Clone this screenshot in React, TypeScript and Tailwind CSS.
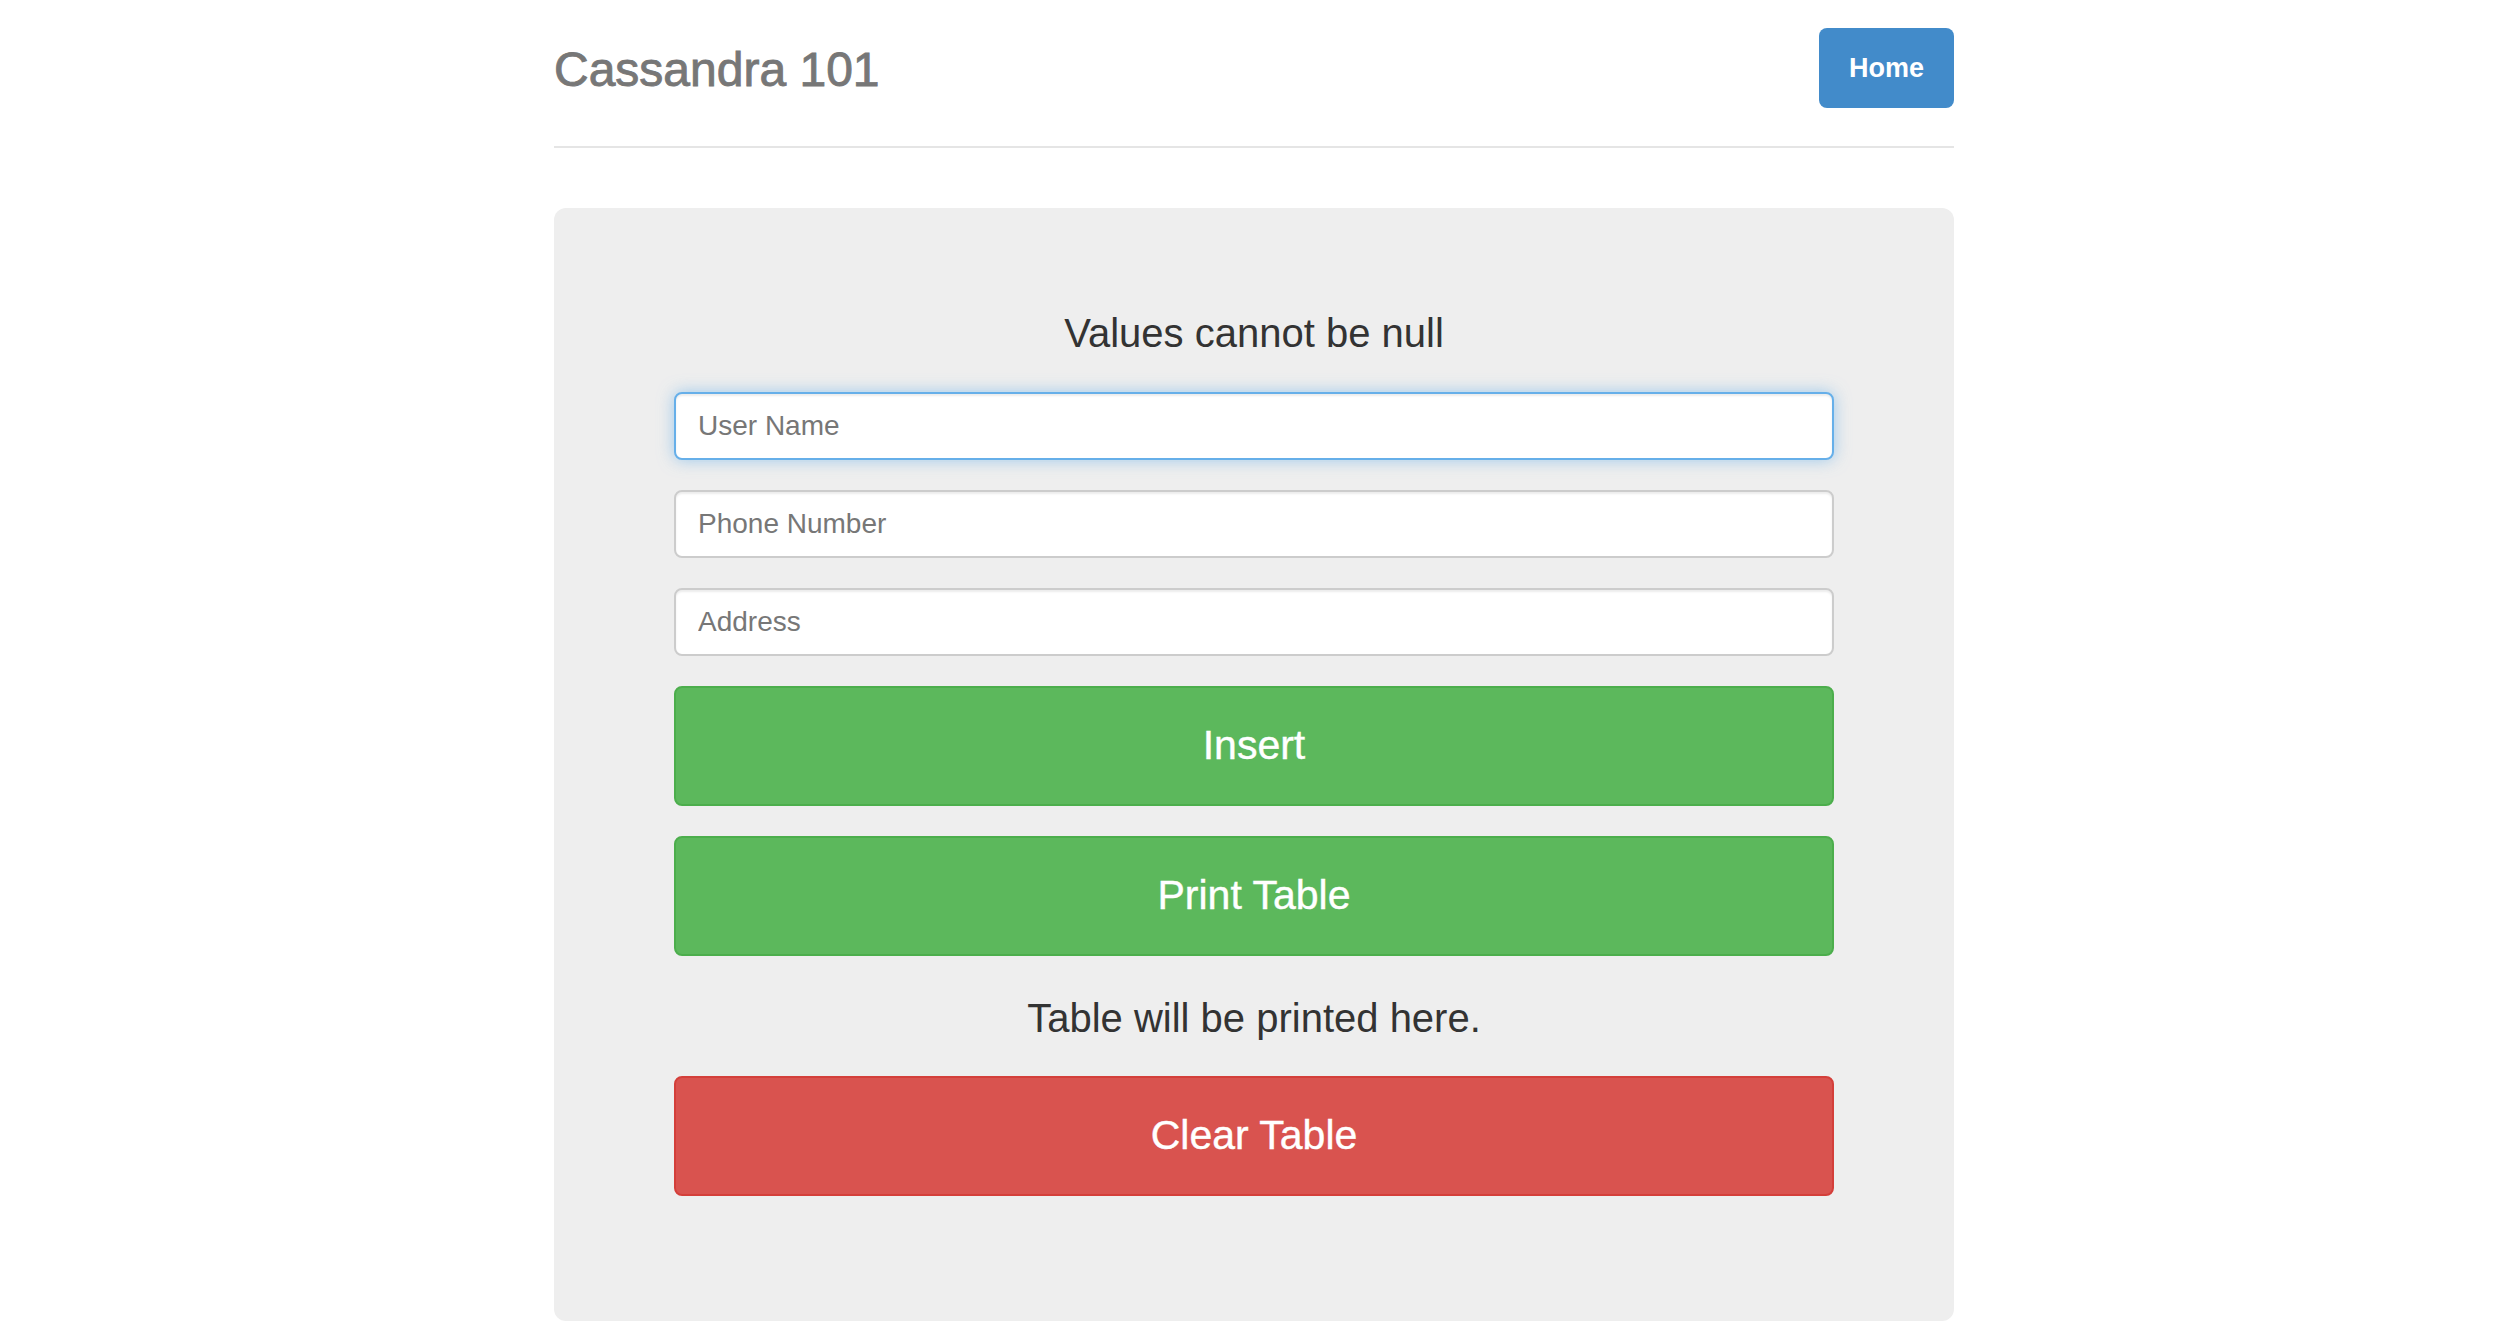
import React from "react";

const inputBase =
  "w-full h-[68px] rounded-[8px] border-2 bg-white pl-[22px] pr-[22px] text-[28px] text-[#555] placeholder:text-[#777] outline-none";

const btn =
  "h-[120px] w-full rounded-[8px] border-2 text-[41px] text-white [-webkit-text-stroke:0.4px_#fff]";

export default function App() {
  return (
    <div className="min-h-screen bg-white font-['Liberation_Sans',Arial,sans-serif] text-[#333]">
      <div className="w-[1400px] mx-auto">
        <header className="flex items-center justify-between pt-[28px] pb-[38px] border-b-2 border-[#e5e5e5]">
          <h3 className="pt-[4px] text-[48px] leading-[76px] text-[#777] [-webkit-text-stroke:0.9px_#777]">Cassandra 101</h3>
          <a href="#" className="flex h-[80px] items-center rounded-[8px] bg-[#428bca] px-[30px] text-[27px] font-bold text-white">
            Home
          </a>
        </header>

        <div className="mt-[60px] rounded-[12px] bg-[#eee] px-[120px] pt-[97px] pb-[125px] text-center">
          <p className="text-[40px] leading-[56px]">Values cannot be null</p>

          <div className="mt-[31px] flex flex-col gap-[30px]">
            <input
              type="text"
              placeholder="User Name"
              className={inputBase + " border-[#66afe9] shadow-[inset_0_2px_2px_rgba(0,0,0,0.075),0_0_16px_rgba(102,175,233,0.6)]"}
            />
            <input
              type="text"
              placeholder="Phone Number"
              className={inputBase + " border-[#ccc] shadow-[inset_0_2px_2px_rgba(0,0,0,0.075)]"}
            />
            <input
              type="text"
              placeholder="Address"
              className={inputBase + " border-[#ccc] shadow-[inset_0_2px_2px_rgba(0,0,0,0.075)]"}
            />
            <button className={btn + " border-[#4cae4c] bg-[#5cb85c]"}>Insert</button>
            <button className={btn + " border-[#4cae4c] bg-[#5cb85c]"}>Print Table</button>
          </div>

          <p className="mt-[34px] text-[40px] leading-[56px]">Table will be printed here.</p>

          <button className={btn + " mt-[30px] border-[#d43f3a] bg-[#d9534f]"}>Clear Table</button>
        </div>
      </div>
    </div>
  );
}
